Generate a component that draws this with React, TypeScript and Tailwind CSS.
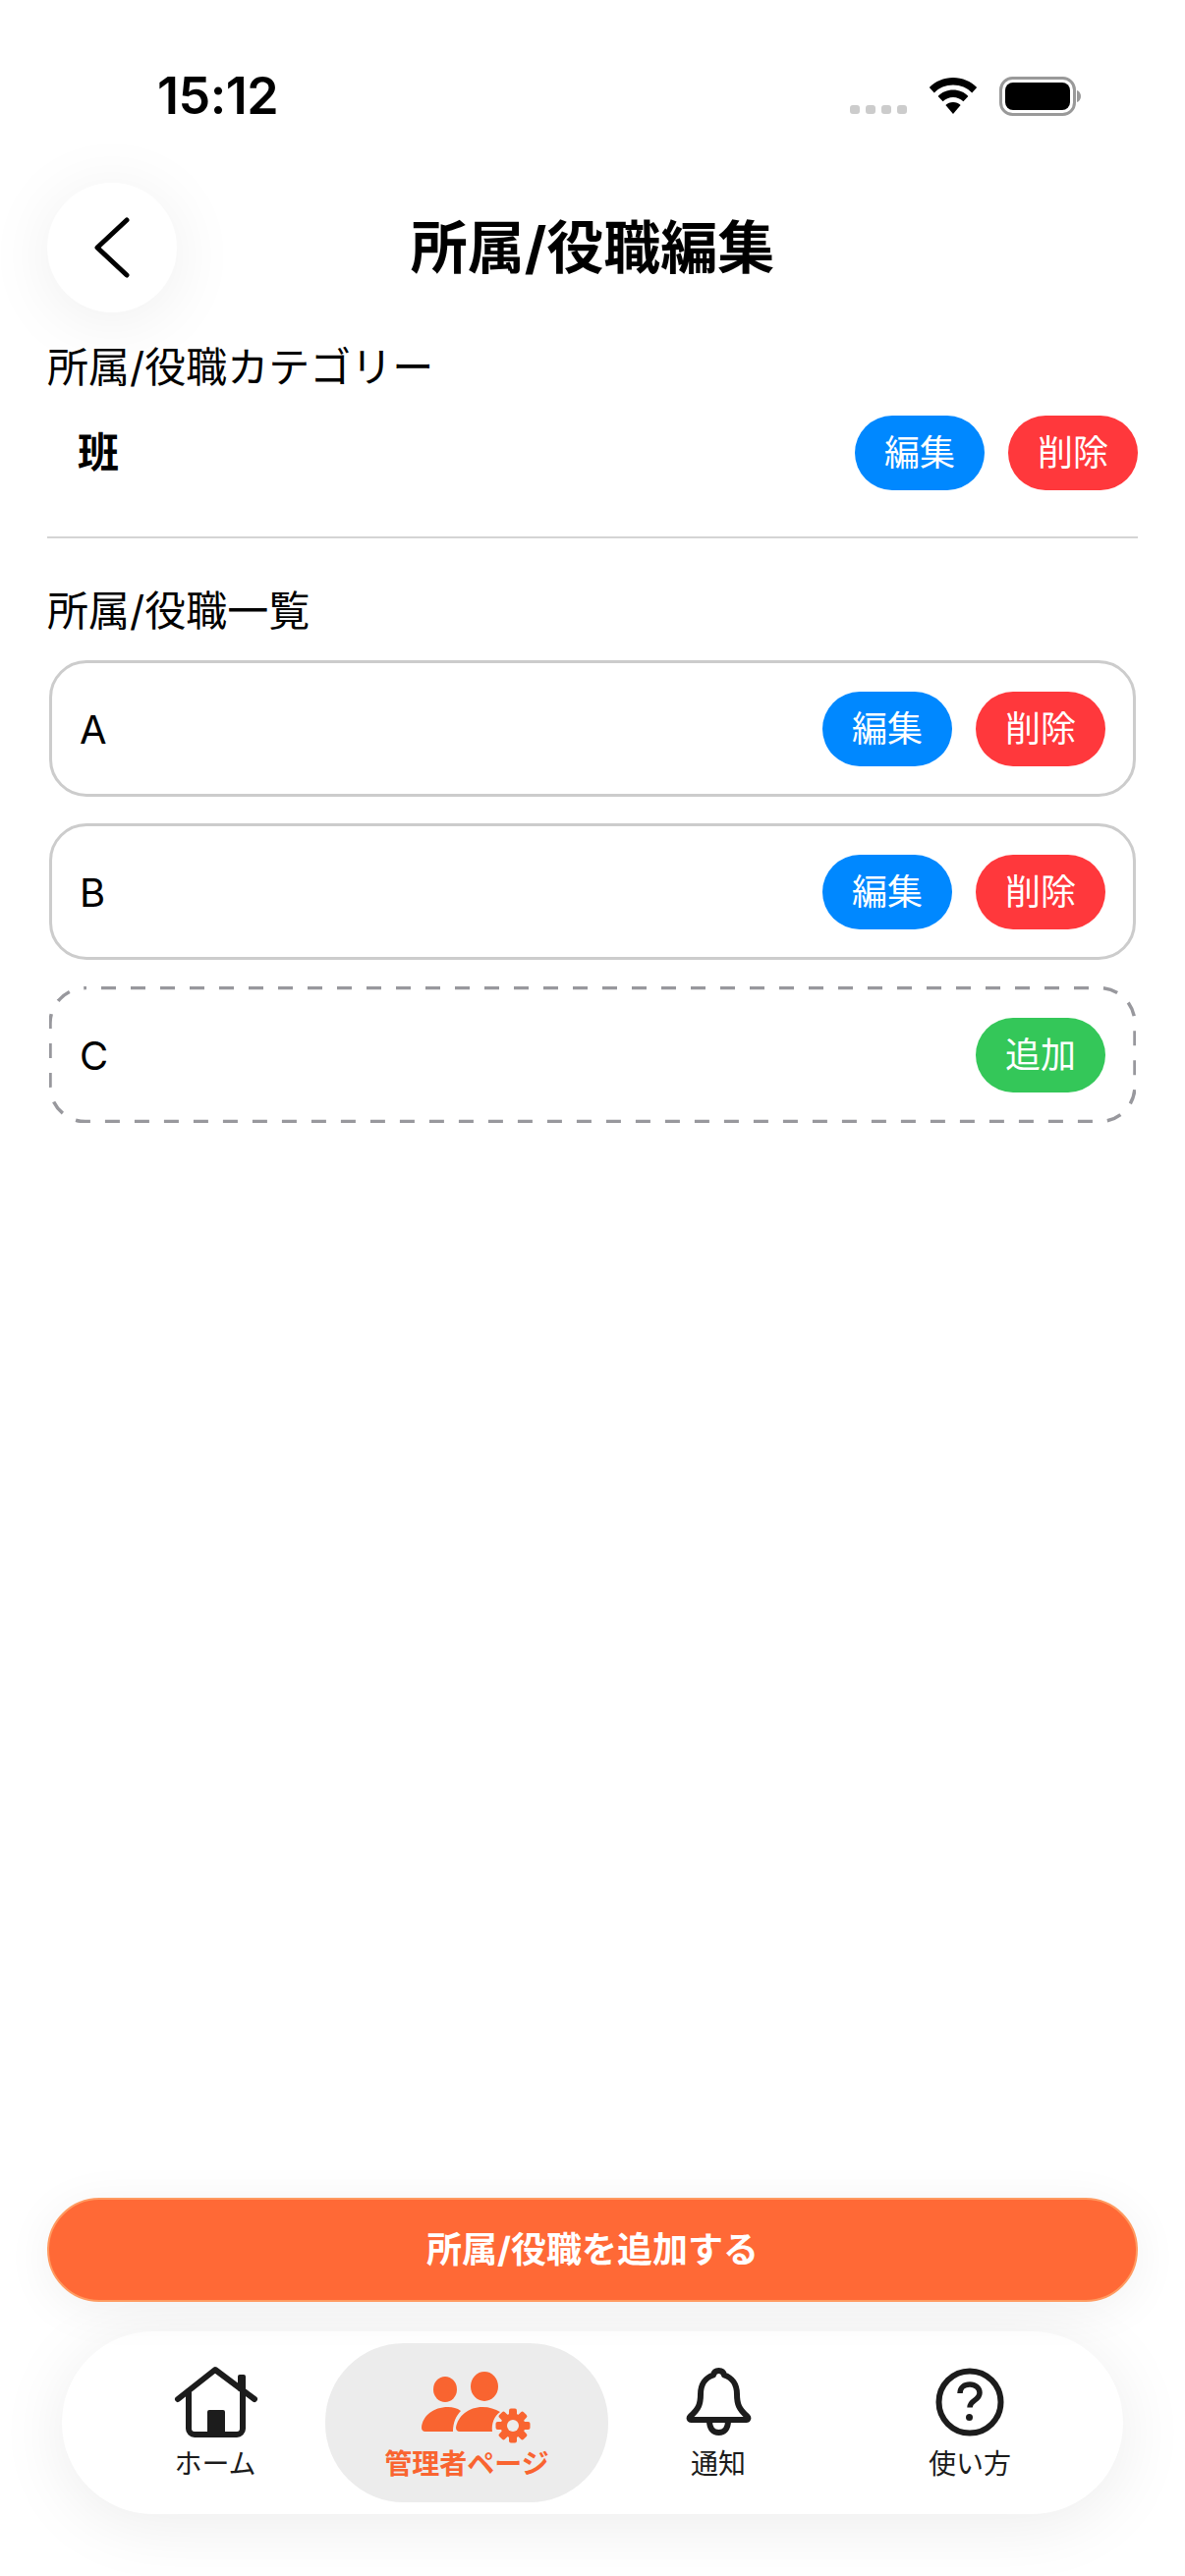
import React from 'react';

const FONT = "font-['Inter','Noto_Sans_CJK_JP',sans-serif]";

function ActionButton({ label, color }: { label: string; color: string }) {
  return (
    <button className={`w-[132px] h-[76px] rounded-[38px] text-white text-[36px] leading-none flex items-center justify-center ${color}`}>
      {label}
    </button>
  );
}

function ItemCard({ name, children, dashed }: { name: string; children: React.ReactNode; dashed?: boolean }) {
  return (
    <div className={`relative h-[139px] rounded-[38px] flex items-center justify-between ${dashed ? 'pl-[31px] pr-[31px]' : 'border-[3px] border-[#cccccc] pl-[28px] pr-[28px]'}`}>
      {dashed && (
        <svg className="absolute inset-0 w-full h-full" fill="none">
          <rect x="1" y="1.600" width="1104" height="136" rx="36" stroke="#98989d" strokeWidth="3.500" strokeDasharray="15 15" strokeDashoffset="14" />
        </svg>
      )}
      <span className="pt-[3px] text-[40px] leading-none text-black">{name}</span>
      <div className="relative flex gap-[24px]">{children}</div>
    </div>
  );
}

function WifiIcon() {
  return (
    <svg width="50" height="38" viewBox="0 0 50 38" fill="#000">
      <path d="M25 0C15.5 0 7 3.8 .8 10l5 5.4C10.6 10.5 17.4 7.5 25 7.5s14.4 3 19.2 7.9l5-5.4C43 3.8 34.5 0 25 0Z" />
      <path d="M25 12.5c-6 0-11.5 2.4-15.4 6.4l5 5.3c2.7-2.7 6.400-4.300 10.400-4.300s7.700 1.600 10.400 4.300l5-5.300C36.500 14.900 31 12.500 25 12.500Z" />
      <path d="M25 25c-3 0-5.700 1.200-7.600 3.100L25 37l7.600-8.900C30.700 26.200 28 25 25 25Z" />
    </svg>
  );
}

function BatteryIcon() {
  return (
    <svg width="83" height="40" viewBox="0 0 83 40">
      <rect x="1.500" y="1.500" width="75" height="37" rx="12" fill="none" stroke="#999999" strokeWidth="3" />
      <rect x="6" y="6" width="66" height="28" rx="8" fill="#000" />
      <path d="M79 14c2.500 .8 4 3 4 6s-1.500 5.200-4 6Z" fill="#999999" />
    </svg>
  );
}

function HomeIcon() {
  return (
    <svg className="-mt-[2px] ml-[2px]" width="94" height="76" viewBox="0 0 94 76" fill="none" stroke="#1c1c1c" strokeWidth="6" strokeLinecap="round" strokeLinejoin="round">
      <path d="M8 34 46 4l40 30" />
      <path d="M19 26v38a6 6 0 0 0 6 6h43a6 6 0 0 0 6-6V24" />
      <rect x="69" y="9" width="8" height="17" rx="2" fill="#1c1c1c" stroke="none" />
      <path d="M38 47a2 2 0 0 1 2-2h14a2 2 0 0 1 2 2v24H38Z" fill="#1c1c1c" stroke="none" />
    </svg>
  );
}

function AdminIcon() {
  const teeth = [0, 45, 90, 135, 180, 225, 270, 315];
  return (
    <svg className="mt-[2px] ml-[20px]" width="112" height="76" viewBox="0 0 112 76" fill="#f96430">
      <ellipse cx="24" cy="20" rx="12" ry="13" />
      <ellipse cx="64" cy="17" rx="14" ry="15" />
      <path d="M4 63C1 63 0 61 0 59 1 47 12 38 27 38c5 0 9 1 13 4-5 5-8 12-8 21Z" />
      <path d="M39 63c-3 0-4-2-4-4 2-12 13-21 27-21 7 0 13 2 18 5-6 4-9 12-8 20Z" />
      <g transform="translate(93 57)">
        <circle r="12.500" />
        {teeth.map((a) => (
          <rect key={a} x="-4" y="-17.500" width="8" height="9" rx="2" transform={`rotate(${a})`} />
        ))}
        <circle r="6" fill="#ececec" />
      </g>
    </svg>
  );
}

function BellIcon() {
  return (
    <svg width="67" height="70" viewBox="0 0 67 70" fill="none" stroke="#1c1c1c" strokeWidth="6" strokeLinejoin="round">
      <path d="M33.500 3c3 0 5 2 5.500 4.500C47 10 52 17 52 27c0 10 2 15 10.500 22.500 1.500 1.500 1 3.500-1 3.500H5.500c-2 0-2.500-2-1-3.500C13 42 15 37 15 27c0-10 5-17 13-19.500C28.500 5 30.500 3 33.500 3Z" />
      <path d="M24 54c0 8 4 12 9.500 12S43 62 43 54" />
    </svg>
  );
}

function HelpIcon() {
  return (
    <svg width="70" height="70" viewBox="0 0 70 70" fill="none" stroke="#1c1c1c" strokeWidth="6">
      <circle cx="35" cy="35" r="31.500" />
      <path d="M25 26c0-6 4.500-9 10-9s10 3.500 10 8.500c0 4-2.500 6-5.500 8-3 2-4.500 3.500-4.500 7" strokeWidth="5.500" />
      <circle cx="34.500" cy="50.500" r="3.500" fill="#1c1c1c" stroke="none" />
    </svg>
  );
}

function NavItem({ icon, label, active }: { icon: React.ReactNode; label: string; active?: boolean }) {
  return (
    <div className={`h-[162px] pt-[25px] flex flex-col items-center ${active ? '-mx-[16px] bg-[#ececec] rounded-[80px]' : ''}`}>
      <div className="h-[70px] flex items-start justify-center">{icon}</div>
      <span className={`mt-[10px] text-[28px] leading-[36px] ${active ? 'text-[#f96430] font-bold' : 'text-[#1c1c1c]'}`}>{label}</span>
    </div>
  );
}

export default function App() {
  return (
    <div className={`${FONT} w-[1206px] h-[2622px] bg-white flex flex-col overflow-hidden`}>
      {/* Status bar */}
      <div className="h-[186px] flex items-start justify-between pt-[68px] pl-[160px] pr-[106px]">
        <span className="text-[52px] leading-[60px] font-semibold text-black tracking-[-0.5px]">15:12</span>
        <div className="flex items-center pt-[10px]">
          <div className="flex gap-[6px] mt-[27px] mr-[22px]">
            <i className="w-[10px] h-[9px] rounded-[3px] bg-[#cccccc]" />
            <i className="w-[10px] h-[9px] rounded-[3px] bg-[#cccccc]" />
            <i className="w-[10px] h-[9px] rounded-[3px] bg-[#cccccc]" />
            <i className="w-[10px] h-[9px] rounded-[3px] bg-[#cccccc]" />
          </div>
          <WifiIcon />
          <div className="ml-[22px]"><BatteryIcon /></div>
        </div>
      </div>

      {/* Header */}
      <div className="px-[48px] grid grid-cols-[132px_1fr_132px] items-center h-[132px]">
        <button className="w-[132px] h-[132px] rounded-full bg-white shadow-[0_8px_70px_rgba(0,0,0,0.07)] flex items-center justify-center">
          <svg width="40" height="64" viewBox="0 0 40 64" fill="none" stroke="#000" strokeWidth="5" strokeLinecap="round" strokeLinejoin="round">
            <path d="M35 4 5 32l30 28" />
          </svg>
        </button>
        <h1 className="text-center text-[58px] leading-none font-bold text-black">所属/役職編集</h1>
      </div>

      {/* Category */}
      <div className="px-[48px] mt-[32px]">
        <p className="text-[42px] leading-[48px] text-black">所属/役職カテゴリー</p>
        <div className="mt-[25px] flex items-center justify-between pl-[31px]">
          <span className="text-[42px] leading-none font-bold text-black">班</span>
          <div className="flex gap-[24px]">
            <ActionButton label="編集" color="bg-[#0088ff]" />
            <ActionButton label="削除" color="bg-[#ff383c]" />
          </div>
        </div>
        <div className="mt-[47px] h-[2px] bg-[#d4d4d4]" />
        <p className="mt-[50px] text-[42px] leading-[48px] text-black">所属/役職一覧</p>
      </div>

      {/* List */}
      <div className="px-[50px] mt-[26px] flex flex-col gap-[27px]">
        <ItemCard name="A">
          <ActionButton label="編集" color="bg-[#0088ff]" />
          <ActionButton label="削除" color="bg-[#ff383c]" />
        </ItemCard>
        <ItemCard name="B">
          <ActionButton label="編集" color="bg-[#0088ff]" />
          <ActionButton label="削除" color="bg-[#ff383c]" />
        </ItemCard>
        <ItemCard name="C" dashed>
          <ActionButton label="追加" color="bg-[#34c759]" />
        </ItemCard>
      </div>

      {/* Bottom */}
      <div className="mt-auto px-[48px] pb-[63px]">
        <button className="w-full h-[106px] rounded-[53px] bg-[#ff6936] border-[2px] border-[#ff9a60] text-white text-[36px] font-bold shadow-[0_8px_50px_rgba(0,0,0,0.06)]">
          所属/役職を追加する
        </button>
        <nav className="mt-[30px] mx-[15px] h-[186px] rounded-[93px] bg-white shadow-[0_10px_70px_rgba(0,0,0,0.08)] px-[28px] grid grid-cols-4 items-center">
          <NavItem icon={<HomeIcon />} label="ホーム" />
          <NavItem icon={<AdminIcon />} label="管理者ページ" active />
          <NavItem icon={<BellIcon />} label="通知" />
          <NavItem icon={<HelpIcon />} label="使い方" />
        </nav>
      </div>
    </div>
  );
}
